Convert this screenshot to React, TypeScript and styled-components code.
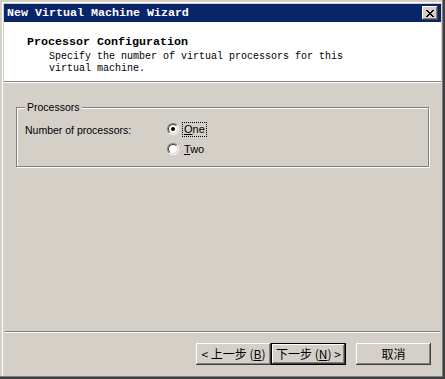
import React from "react";
import styled, { createGlobalStyle } from "styled-components";

const GlobalStyle = createGlobalStyle`
  html, body {
    margin: 0;
    padding: 0;
    background: #d4d0c8;
  }
`;

const Frame = styled.div`
  box-sizing: border-box;
  width: 445px;
  height: 379px;
  padding: 4px 4px 4px 4px;
  display: flex;
  flex-direction: column;
  background: #d4d0c8;
  box-shadow: inset -2px -2px #404040, inset -3px -3px #808080,
    inset 2px 2px #d4d0c8, inset 3px 3px #ffffff;
  font-family: "Liberation Sans", Arial, sans-serif;
  font-size: 10.5px;
  color: #000;
`;

const TitleBar = styled.div`
  height: 18px;
  flex-shrink: 0;
  display: flex;
  align-items: center;
  justify-content: space-between;
  padding: 0 3px 0 3px;
  background: #0a246a;
`;

const TitleText = styled.span`
  font-family: "Liberation Mono", "Courier New", monospace;
  font-weight: 700;
  font-size: 11.67px;
  color: #fff;
  white-space: pre;
`;

const CloseButton = styled.div`
  box-sizing: border-box;
  width: 16px;
  height: 14px;
  background: #d4d0c8;
  box-shadow: inset -1px -1px #404040, inset 1px 1px #ffffff,
    inset -2px -2px #808080;
  display: flex;
  align-items: center;
  justify-content: center;
`;

const Header = styled.div`
  height: 59px;
  flex-shrink: 0;
  background: #fff;
  border-bottom: 1px solid #808080;
  box-shadow: 0 1px 0 #fff;
  margin-bottom: 1px;
  font-family: "Liberation Mono", "Courier New", monospace;
  white-space: pre;
`;

const HeaderTitle = styled.div`
  font-weight: 700;
  font-size: 11.67px;
  line-height: 12px;
  padding: 14px 0 0 23px;
`;

const HeaderText = styled.div`
  font-size: 10px;
  line-height: 12px;
  padding: 3px 0 0 45px;
`;

const Body = styled.div`
  flex: 1;
  display: flex;
  flex-direction: column;
  padding: 24px 12px 0 12px;
`;

const GroupBox = styled.div`
  position: relative;
  box-sizing: border-box;
  height: 60px;
  border: 1px solid #808080;
  box-shadow: 1px 1px 0 #fff, inset 1px 1px 0 #fff;
  padding: 13px 8px 0 8px;
`;

const GroupLabel = styled.span`
  position: absolute;
  top: -7px;
  left: 8px;
  padding: 0 2px;
  background: #d4d0c8;
  line-height: 13px;
`;

const GroupRow = styled.div`
  display: flex;
`;

const FieldLabel = styled.div`
  width: 142px;
  line-height: 16px;
  padding-top: 1px;
`;

const Options = styled.div`
  display: flex;
  flex-direction: column;
  gap: 4px;
`;

const OptionRow = styled.label`
  display: flex;
  align-items: center;
  height: 16px;
`;

const RadioOuter = styled.span`
  box-sizing: border-box;
  width: 12px;
  height: 12px;
  border-radius: 50%;
  border: 1px solid;
  border-color: #808080 #ffffff #ffffff #808080;
  display: flex;
  margin-right: 4px;
`;

const RadioInner = styled.span<{ $checked: boolean }>`
  box-sizing: border-box;
  flex: 1;
  border-radius: 50%;
  border: 1px solid;
  border-color: #404040 #d4d0c8 #d4d0c8 #404040;
  background: #fff;
  display: flex;
  align-items: center;
  justify-content: center;
  &::after {
    content: "";
    width: 4px;
    height: 4px;
    border-radius: 50%;
    background: ${(p) => (p.$checked ? "#000" : "transparent")};
  }
`;

const OptionText = styled.span<{ $focused: boolean }>`
  padding: 0 1px;
  font-size: 11px;
  line-height: 13px;
  outline: ${(p) => (p.$focused ? "1px dotted #000" : "none")};
`;

const Separator = styled.div`
  height: 1px;
  flex-shrink: 0;
  margin: 0 1px 0 1px;
  background: #808080;
  border-bottom: 1px solid #fff;
`;

const ButtonBar = styled.div`
  height: 42px;
  flex-shrink: 0;
  display: flex;
  justify-content: flex-end;
  align-items: flex-start;
  padding: 10px 10px 0 0;
  box-sizing: border-box;
`;

const Button = styled.button<{ $default?: boolean; $gap?: number }>`
  box-sizing: border-box;
  width: 75px;
  height: 22px;
  margin-left: ${(p) => p.$gap ?? 0}px;
  padding: 0;
  border: ${(p) => (p.$default ? "1px solid #000" : "none")};
  background: #d4d0c8;
  box-shadow: inset -1px -1px #404040, inset 1px 1px #ffffff,
    inset -2px -2px #808080;
  font-family: "Noto Sans CJK SC", "Liberation Sans", sans-serif;
  font-size: 12px;
  line-height: 14px;
  color: #000;
  white-space: pre;
`;

export default function App() {
  return (
    <>
      <GlobalStyle />
      <Frame>
        <TitleBar>
          <TitleText>New Virtual Machine Wizard</TitleText>
          <CloseButton>
            <svg width="8" height="7" viewBox="0 0 8 7">
              <path
                d="M0 0h2v1h-2zM6 0h2v1h-2zM1 1h2v1h-2zM5 1h2v1h-2zM2 2h4v1h-4zM3 3h2v1h-2zM2 4h4v1h-4zM1 5h2v1h-2zM5 5h2v1h-2zM0 6h2v1h-2zM6 6h2v1h-2z"
                fill="#000"
              />
            </svg>
          </CloseButton>
        </TitleBar>
        <Header>
          <HeaderTitle>Processor Configuration</HeaderTitle>
          <HeaderText>
            Specify the number of virtual processors for this{"\n"}virtual machine.
          </HeaderText>
        </Header>
        <Body>
          <GroupBox>
            <GroupLabel>Processors</GroupLabel>
            <GroupRow>
              <FieldLabel>Number of processors:</FieldLabel>
              <Options>
                <OptionRow>
                  <RadioOuter>
                    <RadioInner $checked />
                  </RadioOuter>
                  <OptionText $focused>
                    <u>O</u>ne
                  </OptionText>
                </OptionRow>
                <OptionRow>
                  <RadioOuter>
                    <RadioInner $checked={false} />
                  </RadioOuter>
                  <OptionText $focused={false}>
                    <u>T</u>wo
                  </OptionText>
                </OptionRow>
              </Options>
            </GroupRow>
          </GroupBox>
        </Body>
        <Separator />
        <ButtonBar>
          <Button>
            {"< 上一步 ("}
            <u>B</u>
            {")"}
          </Button>
          <Button $default>
            {"下一步 ("}
            <u>N</u>
            {") >"}
          </Button>
          <Button $gap={10}>取消</Button>
        </ButtonBar>
      </Frame>
    </>
  );
}
